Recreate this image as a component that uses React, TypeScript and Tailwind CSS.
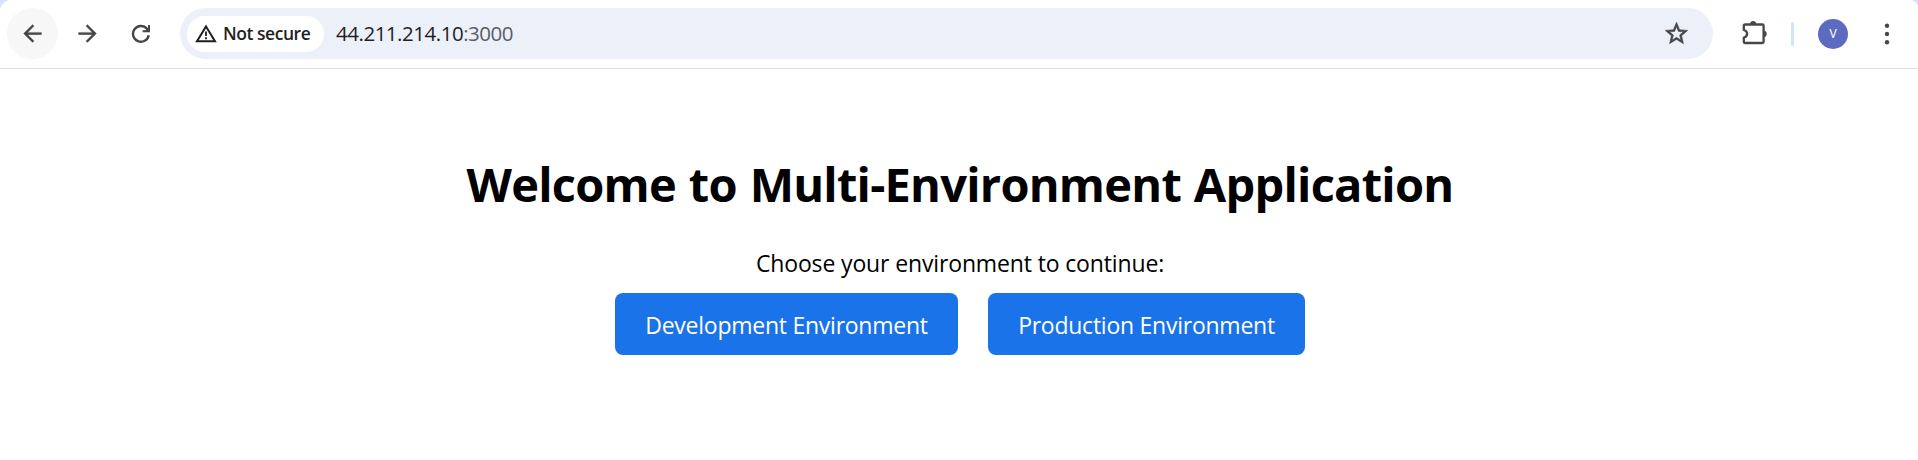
import type { ReactNode } from "react";

function Icon({ children, className }: { children: ReactNode; className: string }) {
  return (
    <svg viewBox="0 0 24 24" fill="currentColor" className={className} aria-hidden="true">
      {children}
    </svg>
  );
}

function Toolbar() {
  return (
    <div className="bg-[#d3e3fd]">
      <header className="flex h-[69px] items-center rounded-tl-[11px] rounded-tr-[8px] border-b border-[#dcdddf] bg-white pb-[1px] pl-[7px] text-[#474747]">
        <button className="flex size-[51px] items-center justify-center rounded-full bg-[#f7f7f7]">
          <Icon className="size-[27px]">
            <path d="M20 11H7.83l5.59-5.59L12 4l-8 8 8 8 1.41-1.41L7.83 13H20v-2z" stroke="currentColor" strokeWidth="0.2" />
          </Icon>
        </button>
        <button className="ml-[2px] flex size-[51px] items-center justify-center rounded-full pl-[3px]">
          <Icon className="size-[27px]">
            <path d="M12 4l-1.41 1.41L16.17 11H4v2h12.17l-5.58 5.59L12 20l8-8z" stroke="currentColor" strokeWidth="0.2" />
          </Icon>
        </button>
        <button className="ml-[4px] flex size-[51px] items-center justify-center rounded-full">
          <svg viewBox="0 0 20 20" className="size-5" fill="none" stroke="currentColor" strokeWidth="2.4" aria-hidden="true">
            <path d="M17.7 11.2A7.9 7.9 0 1 1 15.9 4.7L17.8 6.8" />
            <path d="M18 1V7.3H11.6" strokeWidth="2" />
            <path d="M18 3V7.3H13.8Z" fill="currentColor" stroke="none" />
          </svg>
        </button>
        <div className="ml-[14px] flex h-[51px] w-[1533px] items-center rounded-full bg-[#ecf0f9] pl-[7px] pr-[23px]">
          <div className="flex h-9 w-[137px] items-center rounded-full bg-white pl-[8px] text-[#1f1f1f]">
            <svg viewBox="0 0 22 20" className="h-5 w-[22px]" fill="none" stroke="currentColor" strokeWidth="2" aria-hidden="true">
              <path d="M11 2.5L20 17.2H2Z" />
              <path d="M11 7.5V12M11 13.3V15.3" strokeWidth="1.8" />
            </svg>
            <span className="ml-[6px] whitespace-nowrap pb-[1px] font-['Open_Sans','Noto_Sans',sans-serif] text-[17.5px] font-semibold leading-6 tracking-[-0.46px]">
              Not secure
            </span>
          </div>
          <span className="ml-[12px] whitespace-nowrap pb-[1px] font-['Open_Sans','Noto_Sans',sans-serif] text-[20.5px] leading-7 tracking-[-0.48px] text-[#1f1f1f]">
            44.211.214.10<span className="text-[#5a5d61]">:3000</span>
          </span>
          <Icon className="ml-auto size-[27px]">
            <path
              d="M22 9.24l-7.19-.62L12 2 9.19 8.63 2 9.24l5.46 4.73L5.82 21 12 17.27 18.18 21l-1.63-7.03L22 9.24zM12 15.4l-3.76 2.27 1-4.28-3.32-2.88 4.38-.38L12 6.1l1.71 4.04 4.38.38-3.32 2.88 1 4.28L12 15.4z"
              stroke="currentColor"
              strokeWidth="0.5"
            />
          </Icon>
        </div>
        <svg viewBox="0 0 28 28" className="ml-[28px] size-7" aria-hidden="true">
          <path
            d="M4.2 4.5H21.3Q22.6 4.5 22.6 5.8V21.7Q22.6 23 21.3 23H4.2Q2.8 23 2.8 21.6V17.6Q6.1 16.8 6.1 13.8T2.8 10V5.9Q2.8 4.5 4.2 4.5Z"
            fill="none"
            stroke="currentColor"
            strokeWidth="2.3"
            strokeLinejoin="round"
          />
          <path d="M9 4.5a3.1 3.5 0 0 1 6.2 0ZM22.5 10.8a3.2 3.1 0 0 1 0 6.2Z" fill="currentColor" />
        </svg>
        <span className="ml-[22px] h-6 w-[3px] rounded-full bg-[#d3e3fd]" />
        <span className="ml-[24px] flex size-[30px] items-center justify-center rounded-full bg-[#5c6bc0] pt-[1px] font-[Roboto,sans-serif] text-[12px] text-white">
          V
        </span>
        <svg viewBox="0 0 6 22" className="ml-[36px] h-[22px] w-[6px]" fill="currentColor" aria-hidden="true">
          <circle cx="3" cy="2.7" r="2.2" />
          <circle cx="3" cy="11" r="2.2" />
          <circle cx="3" cy="19.3" r="2.2" />
        </svg>
      </header>
    </div>
  );
}

export default function App() {
  return (
    <div className="min-h-[460px] bg-white">
      <Toolbar />
      <main className="flex flex-col items-center pl-[2px] pt-[83px] font-['Open_Sans','Noto_Sans',sans-serif] text-black">
        <h1 className="whitespace-nowrap text-[47px] font-bold leading-[64px] tracking-[-0.76px] [word-spacing:1.4px]">
          Welcome to Multi-Environment Application
        </h1>
        <p className="mt-[31px] whitespace-nowrap text-[23px] leading-8 tracking-[-0.14px]">
          Choose your environment to continue:
        </p>
        <div className="mt-[14px] flex gap-[30px]">
          <button className="h-[62px] w-[343px] whitespace-nowrap rounded-[8px] bg-[#1a73e8] pt-[2px] text-[23px] leading-8 tracking-[-0.25px] text-white">
            Development Environment
          </button>
          <button className="h-[62px] w-[317px] whitespace-nowrap rounded-[8px] bg-[#1a73e8] pt-[2px] text-[23px] leading-8 tracking-[-0.25px] text-white">
            Production Environment
          </button>
        </div>
      </main>
    </div>
  );
}
